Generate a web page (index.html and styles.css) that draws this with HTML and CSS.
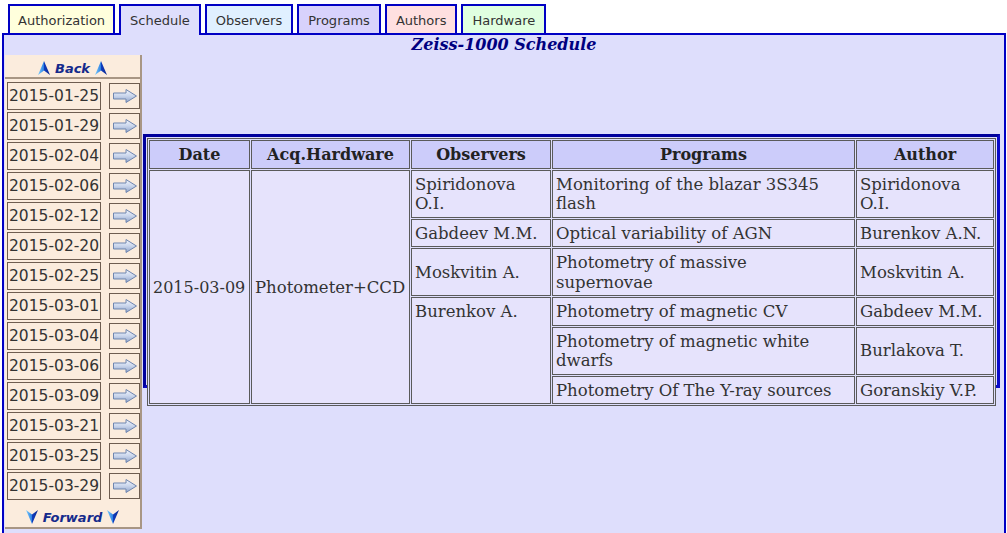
FILE: index.html
```html
<!DOCTYPE html>
<html lang="en">
<head>
    <meta charset="UTF-8">
    <meta name="viewport" content="width=device-width, initial-scale=1.0">
    <title>Zeiss-1000 Schedule</title>
    <link rel="stylesheet" href="styles.css">
</head>
<body>
    <!-- shared icons -->
    <svg class="sprites" xmlns="http://www.w3.org/2000/svg">
        <defs>
            <linearGradient id="gradGo" x1="0" y1="0" x2="0" y2="1">
                <stop offset="0" stop-color="#f4f7fd"/>
                <stop offset="0.5" stop-color="#c9d5ec"/>
                <stop offset="1" stop-color="#8fa3c8"/>
            </linearGradient>
            <linearGradient id="gradNav" x1="0" y1="0" x2="1" y2="0">
                <stop offset="0" stop-color="#7fd0ff"/>
                <stop offset="0.5" stop-color="#2a7de0"/>
                <stop offset="0.51" stop-color="#0c3cc0"/>
                <stop offset="1" stop-color="#102a90"/>
            </linearGradient>
        </defs>
        <symbol id="ico-go" viewBox="0 0 26 16">
            <polygon points="1.5,5 14,5 14,1.5 24.5,8 14,14.5 14,11 1.5,11" fill="url(#gradGo)" stroke="#6f86b0" stroke-width="1"/>
        </symbol>
        <symbol id="ico-up" viewBox="0 0 12 14">
            <polygon points="6,0 12,14 6,9.5 0,14" fill="url(#gradNav)"/>
        </symbol>
        <symbol id="ico-down" viewBox="0 0 12 14">
            <polygon points="0,0 6,4.5 12,0 6,14" fill="url(#gradNav)"/>
        </symbol>
    </svg>

    <div class="tabs">
        <a class="tab tab-auth" href="#">Authorization</a>
        <a class="tab tab-schedule active" href="#">Schedule</a>
        <a class="tab tab-observers" href="#">Observers</a>
        <a class="tab tab-programs" href="#">Programs</a>
        <a class="tab tab-authors" href="#">Authors</a>
        <a class="tab tab-hardware" href="#">Hardware</a>
    </div>

    <div class="panel">
        <h2 class="title">Zeiss-1000 Schedule</h2>

        <div class="layout">
            <div class="sidebar">
                <a class="nav-btn" href="#">
                    <svg class="nav-ico"><use href="#ico-up"/></svg>
                    Back
                    <svg class="nav-ico"><use href="#ico-up"/></svg>
                </a>

                <div class="date-list">
                    <div class="date-row"><span class="date-box">2015-01-25</span><a class="go-btn" href="#"><svg class="go-ico"><use href="#ico-go"/></svg></a></div>
                    <div class="date-row"><span class="date-box">2015-01-29</span><a class="go-btn" href="#"><svg class="go-ico"><use href="#ico-go"/></svg></a></div>
                    <div class="date-row"><span class="date-box">2015-02-04</span><a class="go-btn" href="#"><svg class="go-ico"><use href="#ico-go"/></svg></a></div>
                    <div class="date-row"><span class="date-box">2015-02-06</span><a class="go-btn" href="#"><svg class="go-ico"><use href="#ico-go"/></svg></a></div>
                    <div class="date-row"><span class="date-box">2015-02-12</span><a class="go-btn" href="#"><svg class="go-ico"><use href="#ico-go"/></svg></a></div>
                    <div class="date-row"><span class="date-box">2015-02-20</span><a class="go-btn" href="#"><svg class="go-ico"><use href="#ico-go"/></svg></a></div>
                    <div class="date-row"><span class="date-box">2015-02-25</span><a class="go-btn" href="#"><svg class="go-ico"><use href="#ico-go"/></svg></a></div>
                    <div class="date-row"><span class="date-box">2015-03-01</span><a class="go-btn" href="#"><svg class="go-ico"><use href="#ico-go"/></svg></a></div>
                    <div class="date-row"><span class="date-box">2015-03-04</span><a class="go-btn" href="#"><svg class="go-ico"><use href="#ico-go"/></svg></a></div>
                    <div class="date-row"><span class="date-box">2015-03-06</span><a class="go-btn" href="#"><svg class="go-ico"><use href="#ico-go"/></svg></a></div>
                    <div class="date-row"><span class="date-box">2015-03-09</span><a class="go-btn" href="#"><svg class="go-ico"><use href="#ico-go"/></svg></a></div>
                    <div class="date-row"><span class="date-box">2015-03-21</span><a class="go-btn" href="#"><svg class="go-ico"><use href="#ico-go"/></svg></a></div>
                    <div class="date-row"><span class="date-box">2015-03-25</span><a class="go-btn" href="#"><svg class="go-ico"><use href="#ico-go"/></svg></a></div>
                    <div class="date-row"><span class="date-box">2015-03-29</span><a class="go-btn" href="#"><svg class="go-ico"><use href="#ico-go"/></svg></a></div>
                </div>

                <a class="nav-btn" href="#">
                    <svg class="nav-ico"><use href="#ico-down"/></svg>
                    Forward
                    <svg class="nav-ico"><use href="#ico-down"/></svg>
                </a>
            </div>

            <div class="content">
                <div class="frame">
                    <table class="schedule">
                        <tr>
                            <th class="col-date">Date</th>
                            <th class="col-hw">Acq.Hardware</th>
                            <th class="col-obs">Observers</th>
                            <th class="col-prog">Programs</th>
                            <th class="col-author">Author</th>
                        </tr>
                        <tr>
                            <td rowspan="6" class="nowrap">2015-03-09</td>
                            <td rowspan="6">Photometer+CCD</td>
                            <td>Spiridonova O.I.</td>
                            <td>Monitoring of the blazar 3S345 flash</td>
                            <td>Spiridonova O.I.</td>
                        </tr>
                        <tr>
                            <td>Gabdeev M.M.</td>
                            <td>Optical variability of AGN</td>
                            <td>Burenkov A.N.</td>
                        </tr>
                        <tr>
                            <td>Moskvitin A.</td>
                            <td>Photometry of massive supernovae</td>
                            <td>Moskvitin A.</td>
                        </tr>
                        <tr>
                            <td rowspan="3" class="top">Burenkov A.</td>
                            <td>Photometry of magnetic CV</td>
                            <td>Gabdeev M.M.</td>
                        </tr>
                        <tr>
                            <td>Photometry of magnetic white dwarfs</td>
                            <td>Burlakova T.</td>
                        </tr>
                        <tr>
                            <td>Photometry Of The Y-ray sources</td>
                            <td>Goranskiy V.P.</td>
                        </tr>
                    </table>
                </div>
            </div>
        </div>
    </div>
</body>
</html>
```

FILE: styles.css
```css
body {
    margin: 0;
    background: white;
    font-family: "DejaVu Sans", sans-serif;
    color: #333;
}
.sprites {
    position: absolute;
    width: 0;
    height: 0;
    overflow: hidden;
}
.tabs {
    display: flex;
    gap: 4px;
    padding: 4px 0 0 8px;
}
.tab {
    display: block;
    height: 27px;
    line-height: 29px;
    padding: 0 9px;
    border: 2px solid #0000c4;
    border-bottom: none;
    font-size: 13px;
    color: #333;
    text-decoration: none;
}
.tab-auth {
    padding: 0 8px;
    background-color: #ffffdc;
}
.tab-schedule { background-color: #dedefc; }
.tab-observers { background-color: #e0f0ff; }
.tab-programs { background-color: #d8d2fc; }
.tab-authors { background-color: #ffe0e0; }
.tab-hardware { background-color: #e0ffe0; }
.tab.active {
    position: relative;
    z-index: 1;
    margin-bottom: -2px;
    height: 29px;
}
.panel {
    box-sizing: border-box;
    height: calc(100vh - 33px);
    margin: 0 1px 0 2px;
    border: 2px solid #0000c4;
    border-bottom: none;
    background-color: #dedefc;
}
.title {
    margin: 0;
    height: 20px;
    line-height: 19px;
    text-align: center;
    font-family: "DejaVu Serif", serif;
    font-size: 16px;
    font-style: italic;
    font-weight: bold;
    color: #000080;
}
.layout {
    display: flex;
    align-items: flex-start;
}
.sidebar {
    width: 137px;
    margin-left: 1px;
    box-sizing: border-box;
    border-right: 2px solid #a89684;
    background-color: #fbecdd;
}
.nav-btn {
    display: flex;
    justify-content: center;
    align-items: center;
    gap: 5px;
    height: 24px;
    padding-top: 4px;
    box-sizing: border-box;
    border-bottom: 2px solid #a89684;
    font-size: 13px;
    font-style: italic;
    font-weight: bold;
    color: #142a8c;
    text-decoration: none;
}
.nav-btn:last-child {
    height: 26px;
    padding-top: 4px;
}
.nav-ico {
    width: 12px;
    height: 14px;
}
.date-list {
    padding: 2px 0;
}
.date-row {
    display: flex;
    align-items: center;
    height: 30px;
}
.date-box {
    box-sizing: border-box;
    width: 95px;
    height: 28px;
    margin-left: 2px;
    padding-left: 1px;
    border: 1px solid #6e5d50;
    font-size: 15.5px;
    line-height: 26px;
}
.go-btn {
    display: flex;
    justify-content: center;
    align-items: center;
    box-sizing: border-box;
    width: 31px;
    height: 26px;
    margin-left: 8px;
    border: 1px solid #6e5d50;
}
.go-ico {
    width: 26px;
    height: 16px;
}
.content {
    flex: 1;
}
.frame {
    box-sizing: border-box;
    height: 254px;
    margin: 79px 4px 0 1px;
    padding: 1px;
    border: 3px solid #0a0ac8;
    border-top-color: #00009c;
    border-left-color: #00009c;
}
.schedule {
    width: 100%;
    table-layout: fixed;
    border: 1px solid #5a5a5a;
    border-spacing: 1px;
    background-color: #dedefc;
    font-family: "DejaVu Serif", serif;
    font-size: 16.5px;
    color: #333;
}
.schedule th,
.schedule td {
    box-sizing: border-box;
    padding: 4px 3px 3px;
    border: 1px solid #5a5a5a;
    line-height: 19.5px;
}
.schedule th {
    background-color: #ccccfa;
    color: #222;
    font-size: 16px;
}
.schedule td {
    padding-right: 7px;
    text-align: left;
    background-color: #e6e3fc;
}
.schedule td.top {
    vertical-align: top;
}
.schedule td.nowrap {
    padding-right: 2px;
    white-space: nowrap;
    font-size: 16px;
}
.col-date { width: 101px; }
.col-hw { width: 159px; }
.col-obs { width: 140px; }
.col-prog { width: 303px; }
```
